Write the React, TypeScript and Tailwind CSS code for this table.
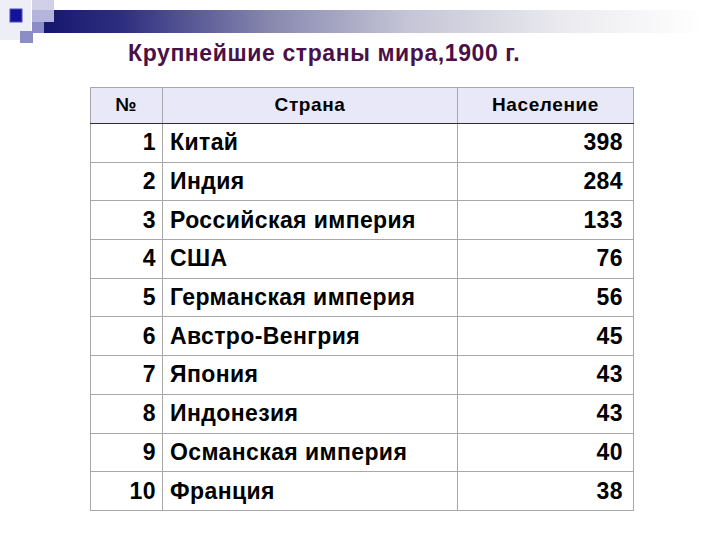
import React from "react";

const rows: [number, string, number][] = [
  [1, "Китай", 398],
  [2, "Индия", 284],
  [3, "Российская империя", 133],
  [4, "США", 76],
  [5, "Германская империя", 56],
  [6, "Австро-Венгрия", 45],
  [7, "Япония", 43],
  [8, "Индонезия", 43],
  [9, "Османская империя", 40],
  [10, "Франция", 38],
];

function Logo() {
  return (
    <svg width="720" height="46" viewBox="0 0 720 46" className="block">
      <defs>
        <linearGradient id="bar" x1="0" x2="1" y1="0" y2="0">
          <stop offset="0" stopColor="#16166e" />
          <stop offset="0.12" stopColor="#2e2e80" />
          <stop offset="0.35" stopColor="#8a8ab0" />
          <stop offset="0.55" stopColor="#c4c4d6" />
          <stop offset="0.8" stopColor="#ececf0" />
          <stop offset="1" stopColor="#ffffff" />
        </linearGradient>
      </defs>
      <rect x="0" y="0" width="31" height="40" fill="#eeeef7" />
      <rect x="32" y="0" width="22" height="21" fill="#d0d0e8" />
      <rect x="43" y="10" width="660" height="23" fill="url(#bar)" />
      <rect x="32" y="10" width="22" height="12" fill="#b4b4dc" />
      <rect x="32" y="22" width="12" height="11" fill="#8c8cc8" />
      <rect x="10" y="9" width="12" height="13" fill="#12129a" stroke="#4c4cc0" strokeWidth="1" />
      <rect x="20" y="31" width="13" height="12" fill="#8c8cc6" />
    </svg>
  );
}

export default function App() {
  return (
    <div className="w-[720px] h-[540px] bg-white overflow-hidden" style={{ fontFamily: '"Liberation Sans", Arial, sans-serif' }}>
      <Logo />
      <div className="pl-[128px] -mt-[5px] text-[23px] font-bold leading-[24px] tracking-[0.6px] text-[#4a1048]">
        Крупнейшие страны мира,1900 г.
      </div>
      <div className="pl-[90px] pt-[22px]">
        <table className="border-collapse w-[543px] table-fixed text-black font-bold">
          <colgroup>
            <col className="w-[72px]" />
            <col className="w-[295px]" />
            <col className="w-[176px]" />
          </colgroup>
          <thead>
            <tr className="h-[36px] bg-[#e8e8f8] text-[19px] tracking-[0.6px]">
              <th className="border border-[#a8a8a8] border-b-[#303030] text-center font-bold">№</th>
              <th className="border border-[#a8a8a8] border-b-[#303030] text-center font-bold">Страна</th>
              <th className="border border-[#a8a8a8] border-b-[#303030] text-center font-bold">Население</th>
            </tr>
          </thead>
          <tbody className="text-[23px] tracking-[0.4px]">
            {rows.map(([n, c, p]) => (
              <tr key={n} className="h-[38.7px]">
                <td className="border border-[#a8a8a8] text-right pr-[6px] leading-none">{n}</td>
                <td className="border border-[#a8a8a8] text-left pl-[7px] leading-none">{c}</td>
                <td className="border border-[#a8a8a8] text-right pr-[10px] leading-none">{p}</td>
              </tr>
            ))}
          </tbody>
        </table>
      </div>
    </div>
  );
}
